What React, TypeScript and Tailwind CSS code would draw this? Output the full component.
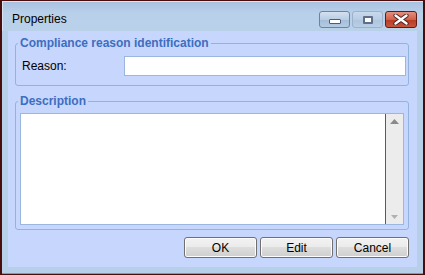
import React from "react";

const font = { fontFamily: '"Liberation Sans", Arial, sans-serif' };

function Btn({ label }: { label: string }) {
  return (
    <div className="w-[73px] h-[21px] rounded-[3px] border border-[#707070] bg-[linear-gradient(#f2f2f2_0%,#ebebeb_48%,#dddddd_50%,#cfcfcf_100%)] shadow-[inset_0_0_0_1px_#fcfcfc] flex items-center justify-center text-[12px] text-black">
      {label}
    </div>
  );
}

export default function App() {
  return (
    <div
      className="w-[425px] h-[275px] border-t border-b border-l-2 border-r-2 border-[#4a0d0d] bg-[#b7cfe9] flex flex-col"
      style={font}
    >
      {/* title bar */}
      <div className="h-[30px] flex items-start bg-[linear-gradient(#a7c1df,#b9d0ea_40%,#bad1ea)] shadow-[inset_1px_1px_0_#d6e4f3]">
        <div className="pl-[10px] pt-[11px] text-[12px] text-black leading-[14px]">Properties</div>
        <div className="ml-auto flex gap-[2px] pt-[10px] pr-[6px]">
          <div className="w-[31px] h-[17px] rounded-[3px] border border-[#6d82a0] bg-[linear-gradient(#d3e1f0,#b8cde4_50%,#a4bcd8_51%,#b4cbe3)] flex items-center justify-center">
            <div className="w-[12px] h-[5px] bg-white border border-[#4c5d78] rounded-[1px] mt-[3px]" />
          </div>
          <div className="w-[31px] h-[17px] rounded-[3px] border border-[#9cb1cb] bg-[linear-gradient(#c8d9ec,#b8cde4_50%,#aec5df_51%,#b9cfe6)] flex items-center justify-center">
            <div className="w-[10px] h-[8px] border-2 border-[#5d6f8b] bg-white rounded-[1px]" />
          </div>
          <div className="w-[32px] h-[17px] rounded-[3px] border border-[#5e1c14] bg-[linear-gradient(#e3907f,#d0604a_50%,#b73a23_51%,#c8553b)] flex items-center justify-center">
            <svg width="16" height="11" viewBox="0 0 16 11">
              <path d="M2.5 1.5 L13.5 9.5 M13.5 1.5 L2.5 9.5" stroke="#4a2020" strokeWidth="4.2" strokeLinecap="round" />
              <path d="M2.5 1.5 L13.5 9.5 M13.5 1.5 L2.5 9.5" stroke="#ffffff" strokeWidth="2.4" strokeLinecap="round" />
            </svg>
          </div>
        </div>
      </div>

      {/* client */}
      <div className="mx-[6px] flex-1 bg-[#c6d6fd] flex flex-col pt-[4px] px-[7px] pr-[8px] pb-[7px]">
        <fieldset className="border border-[#93b3de] rounded-[3px] p-0 m-0 min-w-0">
          <legend className="ml-[2px] px-[2px] text-[12px] leading-[16px] font-bold text-[#3d6ec0]">
            Compliance reason identification
          </legend>
          <div className="flex items-center pl-[6px] pr-[2px] pt-[5px] pb-[9px]">
            <div className="w-[102px] text-[12px] text-black">Reason:</div>
            <div className="flex-1 h-[20px] bg-white border border-[#9bb7df]" />
          </div>
        </fieldset>

        <fieldset className="mt-[7px] border border-[#93b3de] rounded-[3px] p-0 m-0 min-w-0">
          <legend className="ml-[2px] px-[2px] text-[12px] leading-[16px] font-bold text-[#3d6ec0]">
            Description
          </legend>
          <div className="px-[4px] pt-[4px] pb-[4px]">
            <div className="flex h-[112px] border border-[#9bb7df] bg-white">
              <div className="flex-1" />
              <div className="w-[18px] border-l border-[#5a5a5a] bg-[#ececec] flex flex-col items-center justify-between py-[5px]">
                <svg width="9" height="5" viewBox="0 0 9 5"><path d="M0 5 L4.5 0 L9 5 Z" fill="#8a8a8a" /></svg>
                <svg width="7" height="4" viewBox="0 0 7 4"><path d="M0 0 L7 0 L3.5 4 Z" fill="#b0b0b0" /></svg>
              </div>
            </div>
          </div>
        </fieldset>

        <div className="mt-[7px] flex justify-end gap-[3px]">
          <Btn label="OK" />
          <Btn label="Edit" />
          <Btn label="Cancel" />
        </div>
      </div>

      {/* bottom frame */}
      <div className="h-[6px]" />
      <div className="h-[1px] bg-[#38b8d8]" />
    </div>
  );
}
